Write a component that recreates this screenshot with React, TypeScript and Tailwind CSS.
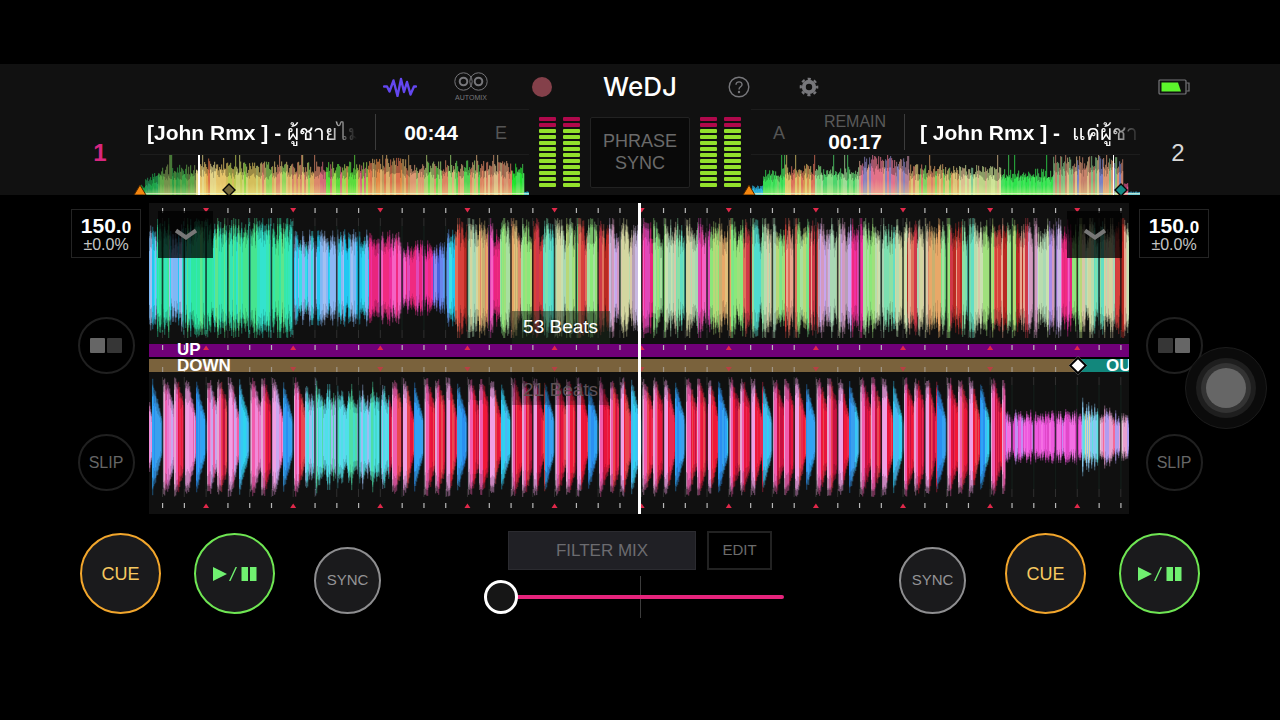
import type { ReactNode } from 'react'

type Segment = { to: number; height: number; colors: string[] }
type Bar = { x: number; height: number; core: number; color: string }

const BEAT = 21.78
const FIRST_BEAT = 13.5
const WIDTH = 980

function createRandom(seed: number) {
  let s = seed
  return () => {
    s = (s * 1664525 + 1013904223) % 4294967296
    return s / 4294967296
  }
}

const GREENS = ['#2fe9a0', '#35e6b8', '#46e58f', '#33e3cf', '#5fe58c', '#34e8a8']
const CYANS = ['#2fd9ef', '#7fb8f5', '#22c8f2', '#8bb7f4', '#3adfe8', '#a3c0f2']
const PINKS = ['#f02fa0', '#f562c4', '#e8257e', '#e048b8', '#f02a80']
const LIMES = ['#9fe07c', '#7ce58a', '#b8d878', '#a8dfa0', '#8be87a']
const REDS = ['#d8403a', '#b92a22', '#e0705a', '#d03848', '#e8a890']
const PALES = ['#b8dcae', '#d3d6a0', '#c9e0b0', '#a9d8b4', '#d8c8a8']
const TEALS = ['#62dfc4', '#7be0b0', '#4fdccf', '#8ce0a4']
const ORANGES = ['#e8a868', '#e2c07a', '#e08a6a', '#c8b070']
const LILACS = ['#a98be8', '#c8a4ee', '#d39ac0', '#c8b8e0', '#b8a0b8']

const DECK1_INTRO: Segment[] = [
  { to: 8, height: 52, colors: CYANS },
  { to: 20, height: 56, colors: GREENS },
  { to: 32, height: 44, colors: CYANS },
  { to: 144, height: 57, colors: GREENS },
  { to: 220, height: 45, colors: CYANS },
  { to: 252, height: 44, colors: PINKS },
  { to: 283, height: 35, colors: PINKS },
  { to: 298, height: 34, colors: ['#6a86ee', '#4a62dd', '#8b8cf0', '#5f9cf2'] },
  { to: 306, height: 48, colors: CYANS },
]

const DECK1_GROOVE = [
  REDS, PALES, ORANGES, PINKS, LIMES, ORANGES, LIMES, REDS, TEALS, PALES, LIMES,
  REDS, LIMES, REDS, LILACS, PALES, LILACS, PINKS, LIMES, PALES, TEALS, PALES,
]

function buildDeck1(): Bar[] {
  const random = createRandom(11)
  const bars: Bar[] = []
  let color = GREENS[0]
  for (let x = 0; x < WIDTH; x++) {
    const intro = DECK1_INTRO.find((s) => x < s.to)
    const step = Math.floor((x - 306) / 11)
    const palette = intro ? intro.colors : DECK1_GROOVE[(step + Math.floor(step / 22) * 3) % 22]
    if (x % 3 === 0 || random() > 0.7) color = palette[Math.floor(random() * palette.length)]
    const phase = (((x - FIRST_BEAT + BEAT * 2) % 10.89) + 10.89) % 10.89
    const base = intro ? intro.height : 64 - phase * 1.6
    const dip = random() > 0.8 ? 0.76 : 1
    const height = Math.min(60, base * dip * (0.78 + random() * 0.32))
    bars.push({ x, height, core: height * (0.56 + random() * 0.26), color })
  }
  return bars
}

function buildDeck2(): Bar[] {
  const random = createRandom(29)
  const bars: Bar[] = []
  let color = TEALS[0]
  const pick = (list: string[]) => list[Math.floor(random() * list.length)]
  for (let x = 0; x < WIDTH; x++) {
    const pos = (x + 1000 * BEAT * 2 - FIRST_BEAT) % (BEAT * 2)
    const hit = Math.floor(pos / 10.9)
    const phase = (pos % 10.9) / 10.9
    const change = x % 2 === 0 || random() > 0.6
    let height = 0

    if (x >= 156 && x < 239) {
      if (change) color = pick(['#4fe0e8', '#45dccc', '#62d6f0', '#4ddfa8', '#9dbdf0'])
      height = (58 - phase * 20) * (0.7 + random() * 0.34)
    } else if (x > 855) {
      const cyan = x > 932 && x < 950
      const late = x >= 950
      if (change)
        color = cyan
          ? pick(['#6fd8e8', '#86c8f0', '#5fe0e0', '#d8d8b0'])
          : late
            ? pick(['#e8a0d0', '#e8c8d8', '#b09cf0', '#f56898'])
            : pick(['#ee5ade', '#f46fe4', '#e048c8', '#c48cf0'])
      const swell = late ? 32 - (x - 950) * 0.35 : 27
      height = (cyan ? 38 : swell) * (0.55 + random() * 0.5)
    } else if (hit === 3) {
      const deep = (x / 43) % 3 < 1.4
      if (change) color = deep ? pick(['#2a8ff0', '#2fa4f5', '#3aa0ee']) : pick(['#35c8f5', '#2fd4ef', '#4ab8f2'])
      height = (60 - phase * 44) * (0.9 + random() * 0.1)
    } else {
      const soft = x < 150
      if (phase < 0.35) color = hit === 2 ? '#f0a0e4' : phase < 0.15 ? '#e6a6d4' : '#f25cae'
      else if (change)
        color =
          soft && hit !== 1
            ? pick(['#f08ad8', '#e878d0', '#c9a6ee', '#ee5fa8'])
            : pick(['#f01838', '#e8143c', '#e82a50', '#c81040', '#e84850'])
      const fall = phase < 0.3 ? 0 : (phase - 0.3) * (hit === 2 ? 54 : 38)
      height = (60 - fall) * (0.88 + random() * 0.12)
    }
    bars.push({ x, height, core: height * (0.6 + random() * 0.2), color })
  }
  return bars
}

const DECK1_BARS = buildDeck1()
const DECK2_BARS = buildDeck2()
const BEATS = Array.from({ length: 45 }, (_, i) => ({ x: FIRST_BEAT + i * BEAT, bar: i % 4 === 2 }))

function Wave({ bars, label, top }: { bars: Bar[]; label: string; top: number }) {
  const mid = top + 60
  return (
    <svg
      viewBox={`0 0 ${WIDTH} 142`}
      preserveAspectRatio="none"
      role="img"
      aria-label={label}
      className="block h-[142px] w-full"
    >
      {BEATS.map((b) => (
        <rect key={b.x} x={b.x - 0.5} y={top} width="1" height="120" fill="#303030" />
      ))}
      {bars.map((b) => (
        <g key={b.x} fill={b.color}>
          <rect x={b.x} y={mid - b.height} width="1.3" height={b.height * 2} opacity="0.35" />
          <rect x={b.x} y={mid - b.height * 0.9} width="1.3" height={b.height * 1.8} opacity="0.35" />
          <rect x={b.x} y={mid - (b.height * 0.8 + b.core * 0.1)} width="1.3" height={b.height * 1.6 + b.core * 0.2} opacity="0.4" />
          <rect x={b.x} y={mid - b.core} width="1.3" height={b.core * 2} />
        </g>
      ))}
      {BEATS.map((b) => (
        <rect key={b.x} x={b.x - 0.8} y={top + 8} width="1.6" height="104" fill="#0c1613" opacity="0.8" />
      ))}
    </svg>
  )
}

function Ticks({ up = false, className }: { up?: boolean; className: string }) {
  return (
    <svg viewBox={`0 0 ${WIDTH} 5`} preserveAspectRatio="none" className={`absolute left-0 h-[5px] w-full ${className}`}>
      {BEATS.map((b) =>
        b.bar ? (
          <path
            key={b.x}
            d={up ? `M${b.x - 3} 5h6l-3 -4.500z` : `M${b.x - 3} 0h6l-3 4.500z`}
            fill="#e0284a"
          />
        ) : (
          <rect key={b.x} x={b.x - 0.5} y="0" width="1.2" height="5" fill="#b8b8b8" />
        ),
      )}
    </svg>
  )
}

const OVERVIEW1: Segment[] = [
  { to: 5, height: 9, colors: ['#1fae4e', '#27a060'] },
  { to: 12, height: 15, colors: ['#1fae4e', '#27a060'] },
  { to: 18, height: 19, colors: ['#1fae4e', '#27b060'] },
  { to: 56, height: 26, colors: ['#3fae4c', '#63b04c', '#2fa848', '#7a9a50'] },
  { to: 86, height: 31, colors: ['#f0b050', '#f3d070', '#e87848', '#f0e090'] },
  { to: 120, height: 28, colors: ['#c8d858', '#8fe048', '#e0c860', '#d8e07a'] },
  { to: 180, height: 28, colors: ['#e8b868', '#e8d078', '#9ae060', '#e89070'] },
  { to: 228, height: 28, colors: ['#a8e858', '#5fe840', '#e8b058', '#e07080'] },
  { to: 270, height: 31, colors: ['#f09048', '#e87850', '#e8b870', '#c8a060'] },
  { to: 300, height: 28, colors: ['#5fe84c', '#b8d878', '#e8a078'] },
  { to: 345, height: 29, colors: ['#a8e878', '#e8b880', '#58e058', '#e88c68'] },
  { to: 372, height: 29, colors: ['#e88868', '#e0a078', '#e8c890'] },
  { to: 384, height: 27, colors: ['#20f030', '#48e858'] },
  { to: 389, height: 3, colors: ['#30c8e8'] },
]

const OVERVIEW2: Segment[] = [
  { to: 12, height: 8, colors: ['#28b8e8', '#30c8f0'] },
  { to: 34, height: 23, colors: ['#38e858', '#50f068', '#78e070'] },
  { to: 64, height: 26, colors: ['#e89858', '#e8d070', '#e87860'] },
  { to: 108, height: 25, colors: ['#88e888', '#a8e8a0', '#50e070'] },
  { to: 158, height: 34, colors: ['#e878a0', '#c088a0', '#e8a890', '#9088c8', '#f07890'] },
  { to: 208, height: 26, colors: ['#e8a868', '#88e068', '#e88870', '#e8d080'] },
  { to: 250, height: 25, colors: ['#c8e090', '#e8c898', '#88d8a0', '#d8f0a0'] },
  { to: 302, height: 22, colors: ['#30f050', '#50e868', '#48f060'] },
  { to: 372, height: 33, colors: ['#e8a078', '#d08870', '#88c888', '#e8c890', '#8088d0'] },
  { to: 377, height: 10, colors: ['#e85890'] },
  { to: 389, height: 3, colors: ['#50c8f0'] },
]

function Overview({ segments, seed, label }: { segments: Segment[]; seed: number; label: string }) {
  const random = createRandom(seed)
  let color = segments[0].colors[0]
  const bars = Array.from({ length: 389 }, (_, x) => {
    const seg = segments.find((s) => x < s.to) ?? segments[segments.length - 1]
    const spike = seg.height > 20 && random() > 0.95
    if (x % 2 === 0 || !seg.colors.includes(color)) color = seg.colors[Math.floor(random() * seg.colors.length)]
    return {
      x,
      height: spike ? 40 : Math.min(39, seg.height * (0.78 + random() * 0.42)),
      inner: seg.height * (0.55 + random() * 0.3),
      color,
    }
  })
  return (
    <svg viewBox="0 0 389 40" preserveAspectRatio="none" role="img" aria-label={label} className="block h-10 w-full">
      <defs>
        <linearGradient id={`glow-${seed}`} x1="0" y1="0" x2="0" y2="1">
          <stop offset="0.4" stopColor="#ffffa0" stopOpacity="0" />
          <stop offset="1" stopColor="#ffffa0" stopOpacity="0.4" />
        </linearGradient>
      </defs>
      {bars.map((b) => (
        <g key={b.x} fill={b.color}>
          <rect x={b.x} y={40 - b.height} width="1.2" height={b.height} opacity="0.62" />
          <rect x={b.x} y={40 - b.inner} width="1.2" height={b.inner} opacity="0.8" />
          <rect x={b.x} y={40 - b.inner} width="1.2" height={b.inner} fill={`url(#glow-${seed})`} />
        </g>
      ))}
      <rect x="2" y="38" width="387" height="1" fill="#e8f8d0" opacity="0.7" />
    </svg>
  )
}

function StartMarker({ className }: { className: string }) {
  return (
    <svg viewBox="0 0 14 11" className={`absolute bottom-0 h-[11px] w-3.5 -translate-x-1/2 ${className}`}>
      <path d="M7 1 13 11H1z" fill="#f5860f" stroke="#4a2600" />
    </svg>
  )
}

function PointMarker({ className }: { className: string }) {
  return (
    <svg viewBox="0 0 14 14" className={`absolute -bottom-0.5 h-3.5 w-3.5 -translate-x-1/2 ${className}`}>
      <path d="M7 1 13 7 7 13 1 7z" stroke="#050505" strokeWidth="1.4" />
    </svg>
  )
}

function Meter({ label }: { label: string }) {
  return (
    <div className="flex gap-[7px]" role="img" aria-label={label}>
      {[0, 1].map((channel) => (
        <div key={channel} className="flex flex-col gap-0.5">
          {Array.from({ length: 12 }, (_, i) => (
            <span
              key={i}
              className={i < 2 ? 'h-1 w-[17px] rounded-[1px] bg-[#b0094c]' : 'h-1 w-[17px] rounded-[1px] bg-[#92e02c]'}
            />
          ))}
        </div>
      ))}
    </div>
  )
}

function GearIcon() {
  return (
    <svg viewBox="0 0 20 20" className="block h-5 w-5" fill="none" stroke="#77777b">
      <circle cx="10" cy="10" r="5.200" strokeWidth="4" />
      <circle cx="10" cy="10" r="8.200" strokeWidth="2.200" strokeDasharray="3.220 3.220" strokeDashoffset="1.610" />
    </svg>
  )
}

function Toolbar() {
  return (
    <nav className="grid h-[45px] grid-cols-[1fr_78px_1fr] items-center">
      <div className="flex items-center justify-end pr-[49px]">
        <button aria-label="Waveform view" className="mr-[37px]">
          <svg viewBox="0 0 34 20" className="block h-5 w-[34px]" fill="none" stroke="#6347f0" strokeWidth="2.400" strokeLinejoin="round" strokeLinecap="round">
            <path d="M1 9.500h3l2.500 5 4-11 4 15.500L18 2l3 13L24 5l3.500 12.500L31 9.500h2" />
          </svg>
        </button>
        <button aria-label="Automix" className="mr-[44px]">
          <svg viewBox="0 0 34 29" className="block h-[29px] w-[34px]" fill="none" stroke="#77777b">
            <circle cx="9.500" cy="9.500" r="8.700" />
            <circle cx="24.500" cy="9.500" r="8.700" />
            <circle cx="9.500" cy="9.500" r="3.800" strokeWidth="2" />
            <circle cx="24.500" cy="9.500" r="3.800" strokeWidth="2" />
            <text x="17" y="28" textAnchor="middle" fontSize="7" fill="#77777b" stroke="none">
              AUTOMIX
            </text>
          </svg>
        </button>
        <button aria-label="Record" className="h-5 w-5 rounded-full bg-[#84404a]" />
      </div>
      <h1 className="text-center font-['Inter',sans-serif] text-[26px] leading-8 font-medium">WeDJ</h1>
      <div className="flex items-center pl-[49px]">
        <button aria-label="Help" className="mr-[49px]">
          <svg viewBox="0 0 22 22" className="block h-[22px] w-[22px]" fill="none" stroke="#77777b" strokeWidth="1.400">
            <circle cx="11" cy="11" r="9.800" />
            <path d="M8 8.700c0-3.900 6.200-3.700 6 0-.1 2-3 2.300-3 4.700" />
            <circle cx="11" cy="16" r="0.500" />
          </svg>
        </button>
        <button aria-label="Settings">
          <GearIcon />
        </button>
        <svg viewBox="0 0 32 16" role="img" aria-label="Battery" className="mr-[90px] ml-auto h-4 w-8">
          <rect x="1" y="1" width="27" height="14" rx="1" fill="none" stroke="#77777b" strokeWidth="1.200" />
          <path d="M28.500 4h2.500v8h-2.500" fill="none" stroke="#77777b" strokeWidth="1.200" />
          <path d="M3.500 3.500H20l3 9H3.500z" fill="#5cf52c" />
        </svg>
      </div>
    </nav>
  )
}

function Title({ children }: { children: ReactNode }) {
  return (
    <div className="min-w-0 flex-1 overflow-hidden pt-0.5 text-[21px] leading-8 font-bold whitespace-pre [mask-image:linear-gradient(to_right,black_85%,transparent)]">
      {children}
    </div>
  )
}

function DeckHeader() {
  return (
    <div className="grid h-[86px] grid-cols-[140px_1fr_222px_1fr_140px]">
      <div className="flex items-center justify-center pt-0.5 pl-[60px] text-2xl font-bold text-[#d9267f]">1</div>

      <section aria-label="Deck 1" className="min-w-0">
        <div className="flex h-[46px] items-center border-y border-[#1d1d1d] pl-[7px]">
          <Title>
            [John Rmx ] - <span className="font-medium">ผู้ชายไม่</span>
          </Title>
          <div className="ml-[18px] h-9 w-px bg-[#3c3c3c]" />
          <div className="w-[110px] pt-0.5 text-center text-[21px] leading-6 font-bold">00:44</div>
          <div className="mr-[13px] w-[30px] pt-0.5 text-center text-lg text-[#555]">E</div>
        </div>
        <div className="relative">
          <Overview segments={OVERVIEW1} seed={5} label="Deck 1 overview" />
          <span className="absolute bottom-0 left-[15%] h-10 w-0.5 bg-white" />
          <StartMarker className="left-0" />
          <PointMarker className="left-[23%] fill-[#75683a]" />
        </div>
      </section>

      <div className="flex items-center justify-center gap-[10px]">
        <Meter label="Deck 1 level" />
        <button className="h-[71px] w-[100px] rounded-[2px] border border-[#222] bg-[#090909] text-lg leading-[22px] text-[#6a6a6a]">
          PHRASE SYNC
        </button>
        <Meter label="Deck 2 level" />
      </div>

      <section aria-label="Deck 2" className="min-w-0">
        <div className="flex h-[46px] items-center border-y border-[#1d1d1d]">
          <div className="ml-[13px] w-[30px] pt-0.5 text-center text-lg text-[#555]">A</div>
          <div className="w-[110px] pl-3 text-center">
            <div className="text-base leading-5 text-[#5a5a5a]">REMAIN</div>
            <div className="text-[21px] leading-5 font-bold">00:17</div>
          </div>
          <div className="mr-[15px] h-9 w-px bg-[#3c3c3c]" />
          <Title>
            {'[ John Rmx ] -  '}
            <span className="font-medium">แค่ผู้ชาย</span>
          </Title>
        </div>
        <div className="relative">
          <Overview segments={OVERVIEW2} seed={8} label="Deck 2 overview" />
          <span className="absolute bottom-0 left-[93%] h-10 w-px bg-white" />
          <StartMarker className="-left-0.5" />
          <PointMarker className="left-[95%] fill-[#158a84]" />
        </div>
      </section>

      <div className="flex items-center justify-center pt-0.5 pr-[64px] text-2xl text-[#d8d8d8]">2</div>
    </div>
  )
}

function DeckSide({ quantizeLeft, className }: { quantizeLeft: boolean; className: string }) {
  return (
    <aside className={`flex w-[70px] flex-col items-center pt-1.5 ${className}`}>
      <button className="h-[49px] w-full border border-[#242424] pt-0.5">
        <span className="block text-[21px] leading-[19px] font-bold">
          150.<span className="text-[17px]">0</span>
        </span>
        <span className="block text-base leading-4 text-[#c4c4c4]">±0.0%</span>
      </button>
      <button
        aria-label="Pads"
        className="mt-[59px] flex h-[57px] w-[57px] items-center justify-center gap-0.5 rounded-full border-2 border-[#202020]"
      >
        <span className={`h-[15px] w-[15px] rounded-[1px] ${quantizeLeft ? 'bg-[#666]' : 'bg-[#363636]'}`} />
        <span className={`h-[15px] w-[15px] rounded-[1px] ${quantizeLeft ? 'bg-[#363636]' : 'bg-[#666]'}`} />
      </button>
      <button className="mt-[60px] h-[57px] w-[57px] rounded-full border-2 border-[#202020] text-base text-[#666]">
        SLIP
      </button>
    </aside>
  )
}

function ExpandButton({ className }: { className: string }) {
  return (
    <button aria-label="Show controls" className={`absolute top-2 flex h-[47px] w-[55px] items-center justify-center bg-black/75 ${className}`}>
      <svg viewBox="0 0 24 14" className="h-3.5 w-6" fill="none" stroke="#777" strokeWidth="4">
        <path d="M2 2.500 12 9.500 22 2.500" />
      </svg>
    </button>
  )
}

function Tracks() {
  return (
    <section aria-label="Waveforms" className="relative overflow-hidden bg-black">
      <div className="relative h-[141px] overflow-hidden bg-[#101010]">
        <Wave bars={DECK1_BARS} label="Deck 1 waveform" top={15} />
        <Ticks className="top-[5px]" />
        <ExpandButton className="left-[9px]" />
        <ExpandButton className="right-[7px]" />
        <p className="absolute bottom-0 left-[37%] flex h-[33px] w-[98px] items-center justify-center bg-[#182818]/50 text-[19px]">
          53 Beats
        </p>
      </div>
      <div className="relative h-[13px] bg-[#700078] pl-7 text-[17px] leading-[12px] font-bold">
        <Ticks up className="top-px" />
        <span className="relative">UP</span>
      </div>
      <div className="relative mt-0.5 flex h-[13px] bg-[#7a623c] text-[17px] leading-[14px] font-bold">
        <Ticks className="bottom-0 opacity-60" />
        <span className="relative flex-1 pl-7">DOWN</span>
        <span className="relative w-[51px] bg-[#12877c] pl-7">
          <span className="absolute -top-px left-0 z-10 h-[13px] w-[13px] -translate-x-1/2 translate-y-px rotate-45 border-2 border-black bg-white" />
          OUT
        </span>
      </div>
      <div className="relative h-[142px] bg-[#101010]">
        <Wave bars={DECK2_BARS} label="Deck 2 waveform" top={5} />
        <Ticks up className="bottom-[6px]" />
        <p className="absolute top-0 left-[37%] flex h-[33px] w-[98px] items-center justify-center bg-black/25 pt-1 text-[19px] text-[#5c5055]">
          21 Beats
        </p>
      </div>
      <div className="absolute inset-y-0 left-1/2 -ml-px w-[3px] bg-white" />
    </section>
  )
}

function PlayPause() {
  return (
    <button aria-label="Play / pause" className="flex h-[81px] w-[81px] items-center justify-center rounded-full border-2 border-[#6fe653] bg-[#1a1a1c]">
      <svg viewBox="0 0 44 16" className="h-4 w-11" fill="#70f070">
        <path d="M0 1 14 8 0 15z" />
        <path d="M16 15 22.500 1h1.500L17.500 15z" />
        <rect x="28.500" y="1" width="6.500" height="14" />
        <rect x="37" y="1" width="6.500" height="14" />
      </svg>
    </button>
  )
}

function Cue() {
  return (
    <button className="h-[81px] w-[81px] rounded-full border-2 border-[#f2a62c] bg-[#1a1a1c] text-lg text-[#f6c860]">
      CUE
    </button>
  )
}

function Sync() {
  return (
    <button className="h-[67px] w-[67px] rounded-full border-2 border-[#8e8e90] bg-[#1a1a1c] text-[15px] text-[#949496]">
      SYNC
    </button>
  )
}

function Transport() {
  return (
    <footer className="grid grid-cols-[1fr_312px_1fr] pt-[17px]">
      <div className="mt-0.5 flex h-[81px] items-end pl-20">
        <Cue />
        <div className="mr-[39px] ml-[33px]">
          <PlayPause />
        </div>
        <Sync />
      </div>
      <div>
        <div className="flex gap-[11px] pl-6">
          <button className="h-[39px] w-[188px] border border-[#2b2b30] bg-[#202025] text-[17px] text-[#6c6c70]">FILTER MIX</button>
          <button className="h-[39px] w-[65px] border-2 border-[#222] text-[15px] text-[#6c6c6c]">EDIT</button>
        </div>
        <div className="relative mt-1.5 flex h-[42px] items-center">
          <span className="absolute inset-y-0 left-1/2 w-px bg-[#3c3c3c]" />
          <input
            type="range"
            aria-label="Crossfader"
            min={0}
            max={100}
            defaultValue={0}
            className="relative h-[34px] w-[300px] appearance-none bg-transparent [&::-webkit-slider-runnable-track]:h-1 [&::-webkit-slider-runnable-track]:rounded-full [&::-webkit-slider-runnable-track]:bg-[#e6247c] [&::-webkit-slider-thumb]:-mt-[15px] [&::-webkit-slider-thumb]:h-[34px] [&::-webkit-slider-thumb]:w-[34px] [&::-webkit-slider-thumb]:appearance-none [&::-webkit-slider-thumb]:rounded-full [&::-webkit-slider-thumb]:border-[3px] [&::-webkit-slider-thumb]:border-white [&::-webkit-slider-thumb]:bg-[#161616]"
          />
        </div>
      </div>
      <div className="mt-0.5 flex h-[81px] items-end justify-end pr-20">
        <Sync />
        <div className="mr-[33px] ml-[39px]">
          <Cue />
        </div>
        <PlayPause />
      </div>
    </footer>
  )
}

export default function App() {
  return (
    <div className="min-h-screen bg-black pt-16 font-['Liberation_Sans',Arial,sans-serif] text-white">
      <header className="bg-[#111]">
        <Toolbar />
        <DeckHeader />
      </header>
      <main className="relative mt-2 grid grid-cols-[149px_1fr_151px]">
        <DeckSide quantizeLeft className="mr-2 ml-auto" />
        <Tracks />
        <DeckSide quantizeLeft={false} className="ml-[10px]" />
        <button
          aria-label="Assistive touch"
          className="absolute top-[144px] right-[13px] flex h-[82px] w-[82px] items-center justify-center rounded-full border border-[#1c1c1c] bg-[#0c0c0c]/90"
        >
          <span className="flex h-[60px] w-[60px] items-center justify-center rounded-full bg-[#1e1e1e]">
            <span className="flex h-[50px] w-[50px] items-center justify-center rounded-full bg-[#333]">
              <span className="h-10 w-10 rounded-full bg-[#666]" />
            </span>
          </span>
        </button>
      </main>
      <Transport />
    </div>
  )
}
